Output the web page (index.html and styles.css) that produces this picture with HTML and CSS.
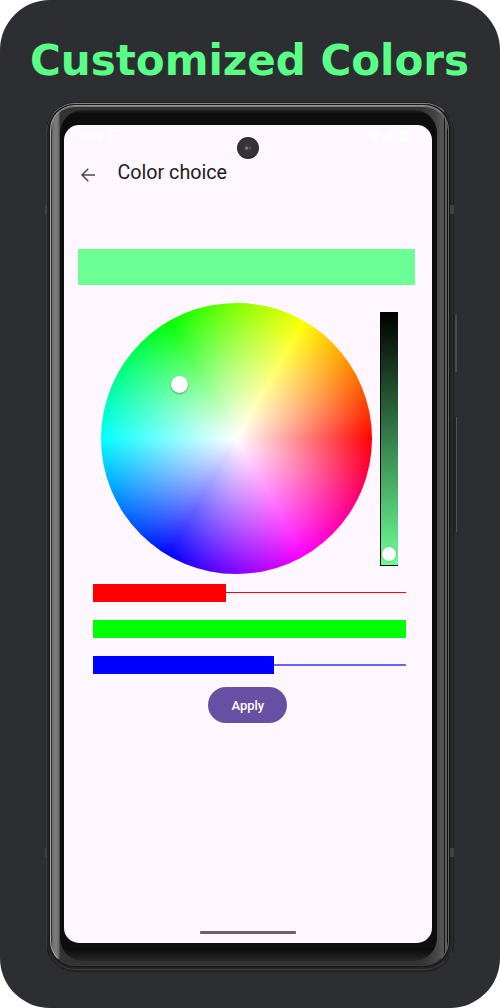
FILE: index.html
```html
<!DOCTYPE html>
<html lang="en">
<head>
<meta charset="utf-8">
<title>Customized Colors</title>
<link rel="stylesheet" href="styles.css">
</head>
<body>
<main class="poster">
  <h1 class="headline">Customized Colors</h1>
  <div class="phone">
    <i class="key power"></i><i class="key volume"></i>
    <i class="seam seam-tl"></i><i class="seam seam-tr"></i><i class="seam seam-bl"></i><i class="seam seam-br"></i>
    <div class="rim"><div class="metal"><div class="bezel">
      <div class="screen">
        <div class="status">
          <span class="clock">9:09</span>
          <svg class="message" viewBox="0 0 12 12"><path d="M1 11V1h10v8H3zM3.500 5h1M5.500 5h1M7.500 5h1" fill="none" stroke="#fff"/></svg>
          <svg class="signals" viewBox="0 0 42 14" fill="#fff"><path d="M0 4Q6.500-1 13 4L6.500 12zM13 12L24 1v11zM32 3h2V1h3v2h2v9h-7z"/></svg>
        </div>
        <svg class="camera" viewBox="0 0 22 22"><circle cx="11" cy="11" r="11" fill="#2d2d2d"/><circle cx="11" cy="11" r="9.500" fill="#333"/><circle cx="11" cy="11" r="4" fill="#3c393d"/><circle cx="9.700" cy="11" r="1.500" fill="#8d7b88"/><circle cx="13" cy="11" r="1.200" fill="#4b5166"/></svg>
        <header class="toolbar">
          <svg class="back" viewBox="0 0 14 14"><path d="M14 7H1M7.300.7L1 7l6.300 6.300" fill="none" stroke="#49454f" stroke-width="1.500"/></svg>
          <span class="title">Color choice</span>
        </header>
        <div class="preview"></div>
        <div class="picker">
          <div class="wheel"><i class="thumb hue-thumb"></i></div>
          <div class="brightness"><i class="thumb value-thumb"></i></div>
        </div>
        <div class="channels">
          <div class="channel red"><i class="fill"></i><i class="track"></i></div>
          <div class="channel green"><i class="fill"></i></div>
          <div class="channel blue"><i class="fill"></i><i class="track"></i></div>
        </div>
        <button class="apply">Apply</button>
        <div class="home-indicator"></div>
      </div>
    </div></div></div>
  </div>
</main>
</body>
</html>
```

FILE: styles.css
```css
* { box-sizing: border-box; }
body { margin: 0; background: #fff; }
i { display: block; }
.poster {
  width: 500px; height: 1008px; padding: 30px 0 0 46px;
  border-radius: 50px; background: #2d2e32; overflow: hidden;
}
.headline {
  width: 440px; height: 60px; margin: 0 0 12px -16px; padding-top: 1px;
  font: bold 42px/60px "DejaVu Sans", sans-serif; color: #5aff87; white-space: nowrap;
}
.phone { position: relative; width: 408px; height: 870px; }
.key { position: absolute; right: -3px; width: 3px; background: #242528; border-right: 1px solid #515256; }
.power { top: 213px; height: 57px; border-right: 2px solid #4b4c4f; }
.volume { top: 315px; height: 115px; }
.seam { position: absolute; width: 2px; height: 9px; background: #414244; z-index: 1; }
.seam-tl { left: -1px; top: 103px; }
.seam-tr { right: 0; top: 103px; width: 4px; }
.seam-bl { left: -1px; top: 746px; }
.seam-br { right: 0; top: 746px; width: 4px; }
.rim {
  height: 100%; padding: 1px 1px 2px; border-radius: 29px;
  background: linear-gradient(90deg, #3b3c3d 0 1px, #161616 1px 3px, #222 3px 404px, #333 404px 406px, #1c1c1d 406px);
}
.metal {
  position: relative; height: 100%; padding: 6px 15px 8px 13px; border-radius: 28px;
  border: solid; border-width: 1px 1px 1px 0; border-color: #858583 #303030 #414141;
  background: #242424;
}
.metal::before {
  content: ""; position: absolute; inset: 1px 3px 3px 3px;
  border-radius: 25px; border: 1px solid; border-color: #969693 #666 #3a3a3a #aaa;
  background: linear-gradient(90deg, #303030 0 1px, #6b6b6b 1px, #7e7e7e 5px, #666 8px, #333 9px 370px, #444 384px, #575757 392px, #505050 393px, #161616 393px 394px, #606060 394px 396px, #111 396px);
  box-shadow: 0 0 0 1px #181818, inset 0 1px #777;
}
.bezel {
  position: relative; height: 100%; padding: 15px 6px 20px 4px; border-radius: 23px;
  background: linear-gradient(#222 0, #0d0d0d 4px, #0d0d0d 840px, #292929 100%);
}
.screen {
  position: relative; display: flex; flex-direction: column;
  width: 368px; height: 818px; border-radius: 15px; overflow: hidden;
  background: #fef7ff; font-family: Roboto, sans-serif; color: #1d1b20;
}
.status { display: flex; align-items: center; height: 22px; padding: 0 22px 0 15px; }
.clock { width: 29px; font-size: 12.500px; color: #fff; }
.message { width: 12px; height: 12px; }
.signals { width: 42px; height: 14px; margin-left: auto; }
.camera { position: absolute; left: 173px; top: 12px; width: 22px; height: 22px; }
.toolbar { display: flex; align-items: center; height: 50px; padding-left: 17px; }
.back { width: 14px; height: 14px; margin-top: 5px; }
.title { margin: 2px 0 0 22.500px; font-size: 19.700px; line-height: 24px; }
.preview { height: 36px; margin: 52px 17px 18px 14.300px; background: #6cff95; }
.picker { display: flex; gap: 8.500px; height: 272px; padding-left: 36.500px; }
.wheel {
  position: relative; width: 271px; height: 271px; margin-top: .4px; border-radius: 50%;
  background: radial-gradient(circle closest-side, #fff, rgba(255,255,255,0)),
    conic-gradient(from 90deg, #f00, #f0f, #00f, #0ff, #0f0, #ff0, #f00);
}
.brightness {
  position: relative; width: 18px; height: 254px; margin-top: 9px;
  border: solid #000; border-width: 1px 0 1px 1px; background: linear-gradient(#000, #6cff95);
}
.thumb { position: absolute; border-radius: 50%; background: #fff; }
.hue-thumb { left: 70.500px; top: 72.500px; width: 17px; height: 17px; box-shadow: 0 1px 2px #0006; }
.value-thumb { left: 1.300px; bottom: 4px; width: 14px; height: 14px; box-shadow: 0 0 2px #0004; }
.channels { display: flex; flex-direction: column; gap: 18px; width: 313px; margin: 9px 0 0 29px; }
.channel { display: flex; align-items: center; height: 18px; }
.fill { height: 18px; background: currentColor; }
.track { flex: 1; height: 1px; background: currentColor; }
.red { color: #f00; }
.red .fill { width: 133px; }
.red .track { margin-bottom: 1px; }
.green { color: #0f0; }
.green .fill { width: 313px; }
.blue { color: #00f; }
.blue .fill { width: 180.500px; }
.blue .track { height: 2px; background: #6763ff; }
.apply {
  width: 79px; height: 36px; margin: 13px 0 0 144.300px; padding: 0;
  border: 0; border-radius: 18px; background: #6750a4; color: #fff;
  font: 500 13px/37px Roboto, sans-serif;
}
.home-indicator { width: 96px; height: 3px; margin: auto 0 9px 136px; border-radius: 1px; background: #69656b; }
```
